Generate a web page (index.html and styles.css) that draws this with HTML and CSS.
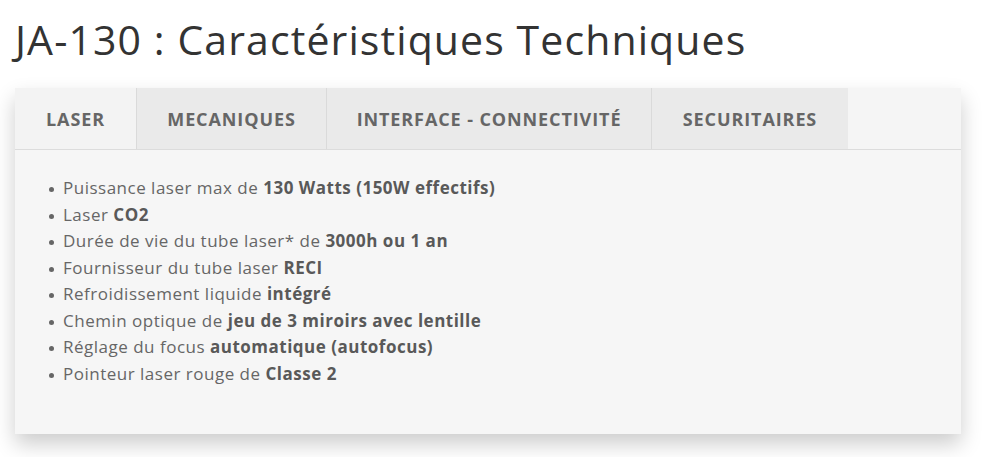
FILE: index.html
```html
<!DOCTYPE html>
<html lang="fr">
<head>
<meta charset="utf-8">
<title>JA-130</title>
<link rel="stylesheet" href="styles.css">
</head>
<body>
<h1 class="title">JA-130 : Caractéristiques Techniques</h1>
<div class="panel">
  <div class="tabs">
    <div class="tab active">LASER</div>
    <div class="tab">MECANIQUES</div>
    <div class="tab">INTERFACE - CONNECTIVITÉ</div>
    <div class="tab">SECURITAIRES</div>
    <div class="tab-fill"></div>
  </div>
  <div class="content">
    <ul class="specs">
      <li>Puissance laser max de <b>130 Watts (150W effectifs)</b></li>
      <li>Laser <b>CO2</b></li>
      <li>Durée de vie du tube laser* de <b>3000h ou 1 an</b></li>
      <li>Fournisseur du tube laser <b>RECI</b></li>
      <li>Refroidissement liquide <b>intégré</b></li>
      <li>Chemin optique de <b>jeu de 3 miroirs avec lentille</b></li>
      <li>Réglage du focus <b>automatique (autofocus)</b></li>
      <li>Pointeur laser rouge de <b>Classe 2</b></li>
    </ul>
  </div>
</div>
</body>
</html>
```
FILE: styles.css
```css
html, body {
  margin: 0;
  padding: 0;
  background: #fff;
}
body {
  font-family: "Open Sans", "DejaVu Sans", sans-serif;
  color: #666;
  padding: 0 23px 23px 15px;
}
.title {
  margin: 0;
  padding-top: 14px;
  height: 74px;
  box-sizing: border-box;
  font-size: 41px;
  font-weight: 400;
  line-height: 50px;
  color: #333;
  letter-spacing: 1.1px;
}
.panel {
  background: #f6f6f6;
  box-shadow: 0 10px 20px rgba(0, 0, 0, 0.2);
  margin-top: 14px;
  height: 346px;
}
.tabs {
  display: flex;
  height: 61px;
  border-bottom: 1px solid #dcdcdc;
}
.tab {
  display: flex;
  align-items: center;
  justify-content: center;
  background: #eaeaea;
  border-right: 1px solid #dadada;
  font-size: 18px;
  font-weight: 700;
  color: #666;
  letter-spacing: 0.9px;
}
.tab:nth-child(1) { width: 121px; background: #f3f3f3; }
.tab:nth-child(2) { width: 189px; }
.tab:nth-child(3) { width: 324px; }
.tab:nth-child(4) { width: 196px; border-right: none; }
.tab-fill {
  flex: 1;
  background: #f5f5f5;
}
.content {
  padding: 25px 0 0 48px;
}
.specs {
  margin: 0;
  padding: 0;
  list-style: none;
}
.specs li {
  position: relative;
  font-size: 17px;
  line-height: 26.5px;
  color: #666;
  letter-spacing: 0.5px;
}
.specs li::before {
  content: "";
  position: absolute;
  left: -14px;
  top: 12px;
  width: 5px;
  height: 5px;
  border-radius: 50%;
  background: #666;
}
.specs b {
  font-weight: 700;
  color: #595959;
}
```
